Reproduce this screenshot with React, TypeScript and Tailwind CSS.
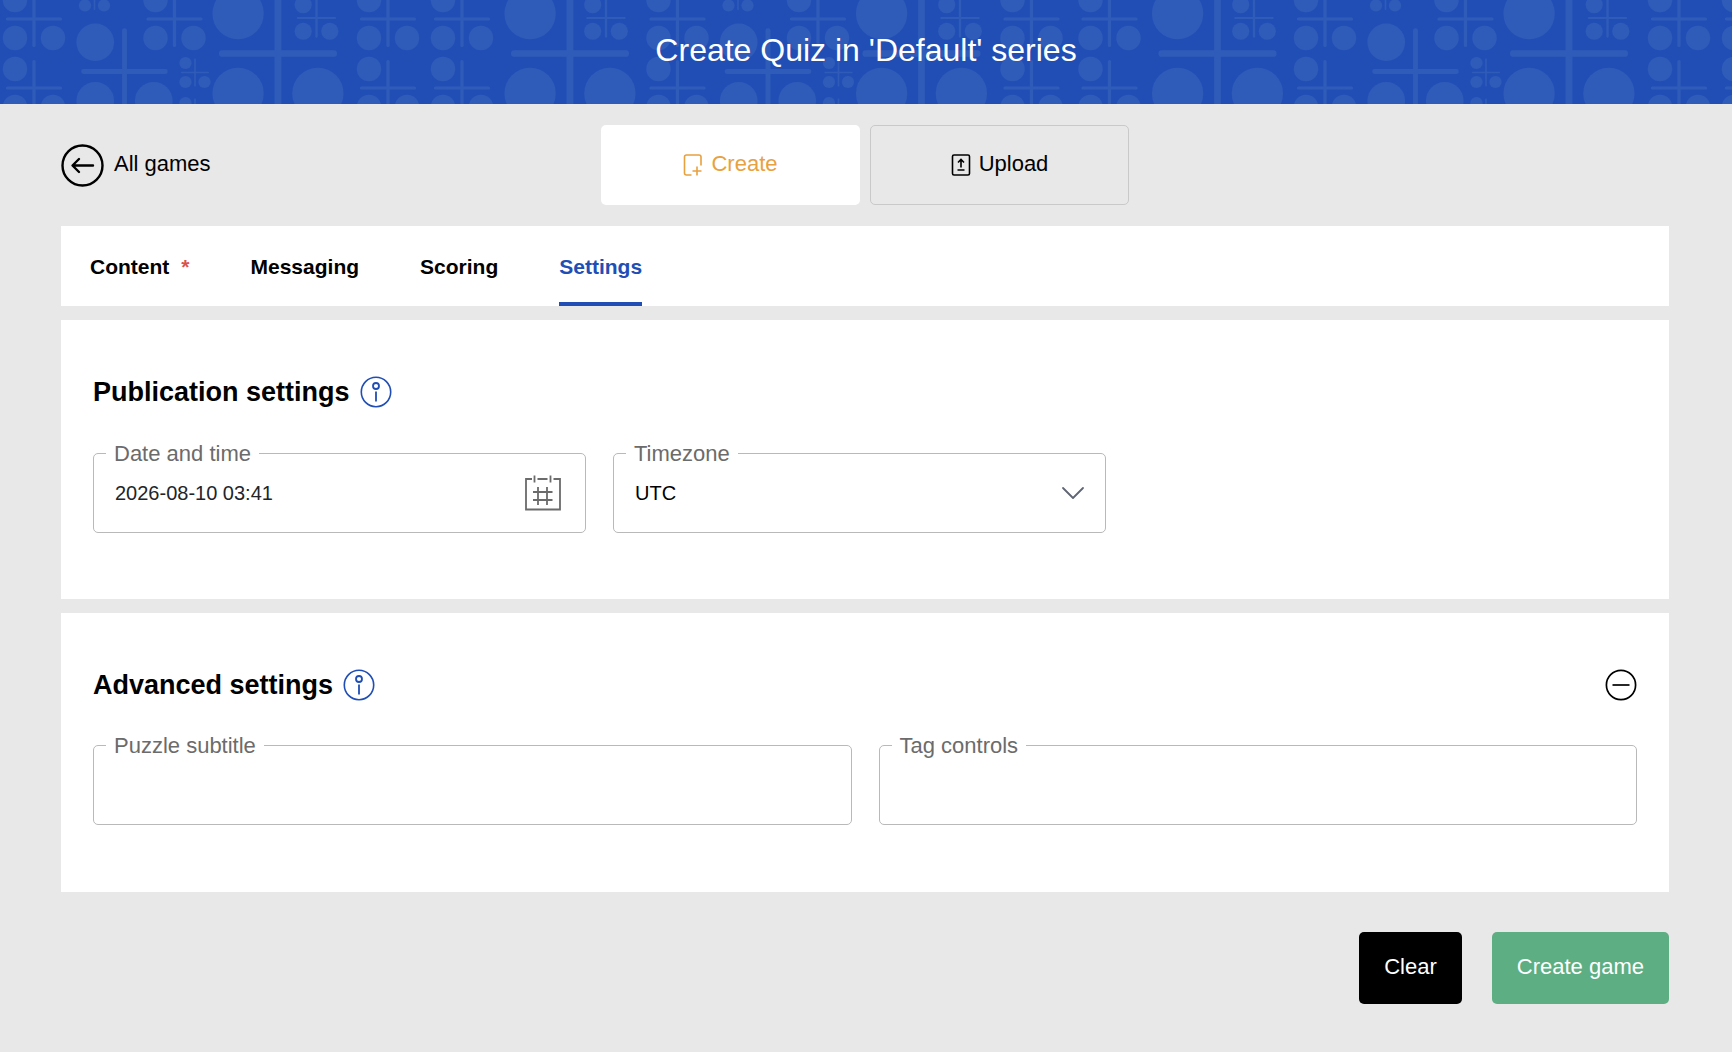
import React, { useState } from "react";

const tabs = [
  { name: "Content", required: true },
  { name: "Messaging" },
  { name: "Scoring" },
  { name: "Settings" },
];

interface MotifProps {
  x: number;
  y: number;
  size: number;
}

// a plus sign with a circle in three of its quarters, drawn round its centre
const Motif: React.FC<MotifProps> = ({ x, y, size }) => (
  <g transform={`translate(${x} ${y}) scale(${size})`}>
    <circle cx="-19" cy="-19" r="12.2" />
    <circle cx="-19" cy="19" r="12.2" />
    <circle cx="19" cy="19" r="12.2" />
    <path
      d="M-26.5 0H26.5M0 -26.5V26.5"
      stroke="#2f5bb9"
      strokeWidth="3.2"
      strokeLinecap="round"
    />
  </g>
);

// appears twice in every repeat of the header pattern
const motifRun = [
  { x: 34, y: 19, size: 1 },
  { x: 34, y: 88, size: 1 },
  { x: 94.5, y: -4, size: 0.5 },
  { x: 124.5, y: 71.5, size: 1.54 },
  { x: 174.5, y: 19, size: 1 },
  { x: 195, y: 72.5, size: 0.5 },
  { x: 195, y: 112.5, size: 0.5 },
  { x: 278, y: 53.5, size: 2.1 },
  { x: 316.5, y: 18, size: 0.7 },
  { x: 388, y: 19, size: 1 },
  { x: 388, y: 88, size: 1 },
];

const motifs = [
  ...motifRun,
  { x: 462, y: 19, size: 1 },
  { x: 462, y: 88, size: 1 },
  { x: 570, y: 53.5, size: 2.1 },
  { x: 606, y: 18, size: 0.7 },
  ...motifRun.map((motif) => ({ ...motif, x: motif.x + 643.5 })),
  { x: 1109.5, y: 19, size: 1 },
  { x: 1109.5, y: 88, size: 1 },
  { x: 1217.5, y: 53.5, size: 2.1 },
  { x: 1254, y: 18, size: 0.7 },
];

const HeaderPattern = () => (
  <svg className="absolute inset-0 h-full w-full" aria-hidden="true">
    <defs>
      <pattern
        id="motifs"
        width="1291"
        height="104"
        patternUnits="userSpaceOnUse"
      >
        <g fill="#2f5bb9">
          {motifs.map((motif, index) => (
            <Motif key={index} {...motif} />
          ))}
        </g>
      </pattern>
    </defs>
    <rect width="100%" height="100%" fill="url(#motifs)" />
  </svg>
);

const InfoIcon = () => (
  <svg width="32" height="32" viewBox="0 0 32 32" fill="none" stroke="#204eb5">
    <circle cx="16" cy="16" r="14.7" strokeWidth="1.6" />
    <circle cx="16" cy="10" r="3" strokeWidth="1.8" />
    <path d="M16 15.5V25.5" strokeWidth="1.8" />
  </svg>
);

const CalendarIcon = () => (
  <svg width="38" height="38" viewBox="0 0 38 38" fill="none" stroke="#6b6b6b">
    <path
      d="M8 5H2V35.5H36V5H29.5M13.5 5H23.5M10.5 1.5V8.5M26.5 1.5V8.5"
      strokeWidth="1.8"
    />
    <path d="M14 13V31M23 13V31M9 18H28.5M9 26H28.5" strokeWidth="1.8" />
  </svg>
);

interface FieldProps {
  id: string;
  label: string;
  children: React.ReactNode;
}

const Field: React.FC<FieldProps> = ({ id, label, children }) => (
  <div className="relative flex h-20 min-w-0 items-center rounded-[5px] border border-[#b9b9b9]">
    <label
      htmlFor={id}
      className="absolute -top-3.5 left-3 bg-white px-2 text-[22px] leading-7 text-[#6b6b6b]"
    >
      {label}
    </label>
    {children}
  </div>
);

interface SectionTitleProps {
  title: string;
}

const SectionTitle: React.FC<SectionTitleProps> = ({ title }) => (
  <div className="flex items-center gap-2.5">
    <h2 className="text-[27px] leading-8 font-bold">{title}</h2>
    <button type="button" aria-label={`About ${title}`}>
      <InfoIcon />
    </button>
  </div>
);

export default function App() {
  const [activeTab, setActiveTab] = useState("Settings");
  const [showAdvanced, setShowAdvanced] = useState(true);
  const [date, setDate] = useState("2026-08-10 03:41");
  const [subtitle, setSubtitle] = useState("");
  const [tags, setTags] = useState("");

  const clear = () => {
    setSubtitle("");
    setTags("");
  };

  return (
    <div className="min-h-screen bg-[#e8e8e8] font-['Liberation_Sans',Arial,sans-serif] text-[22px] leading-7 text-black">
      <header className="relative flex h-26 items-center justify-center overflow-hidden bg-[#204eb5] pb-1">
        <HeaderPattern />
        <h1 className="relative text-[32px] leading-10 text-white">
          Create Quiz in 'Default' series
        </h1>
      </header>

      <main className="pr-[63px] pb-10 pl-[61px]">
        <div className="grid grid-cols-[1fr_auto_1fr] items-center py-[21px]">
          <a href="#" className="flex items-center gap-2.5">
            <svg
              width="43"
              height="43"
              viewBox="0 0 43 43"
              fill="none"
              stroke="currentColor"
              strokeWidth="2.4"
            >
              <circle cx="21.5" cy="21.5" r="20" />
              <path
                d="M32 21.5H12M18 15L11.5 21.5L18 28"
                strokeLinecap="round"
                strokeLinejoin="round"
              />
            </svg>
            <span className="pb-0.5">All games</span>
          </a>
          <div className="flex gap-2.5">
            <button
              type="button"
              className="flex h-20 w-[259px] items-center justify-center gap-2 rounded-[5px] bg-white text-[#e8a13f]"
            >
              <svg
                width="20"
                height="24"
                viewBox="0 0 20 24"
                fill="none"
                stroke="currentColor"
                strokeWidth="1.6"
              >
                <path d="M8.5 22H3.5Q1.5 22 1.5 20V4Q1.5 2 3.5 2H16Q18 2 18 4V12.5" />
                <path d="M9.5 18H18.5M14 13.5V22.5" />
              </svg>
              <span className="pb-0.5">Create</span>
            </button>
            <button
              type="button"
              className="flex h-20 w-[259px] items-center justify-center gap-2 rounded-[5px] border border-[#c9c9c9]"
            >
              <svg
                width="20"
                height="24"
                viewBox="0 0 20 24"
                fill="none"
                stroke="currentColor"
                strokeWidth="1.6"
              >
                <rect x="1.5" y="2" width="17" height="20" rx="1.5" />
                <path d="M10 14.5V7M7 9.5L10 6.5L13 9.5M6.5 17H13.5" />
              </svg>
              <span className="pb-0.5">Upload</span>
            </button>
          </div>
        </div>

        <nav className="flex h-20 gap-[61px] bg-white px-[29px]">
          {tabs.map((tab) => (
            <button
              key={tab.name}
              type="button"
              onClick={() => setActiveTab(tab.name)}
              className={`flex items-center gap-3 border-b-4 pt-1.5 text-[21px] font-bold ${
                activeTab === tab.name
                  ? "border-[#204eb5] text-[#204eb5]"
                  : "border-transparent"
              }`}
            >
              {tab.name}
              {tab.required && <span className="text-[#d9534a]">*</span>}
            </button>
          ))}
        </nav>

        <section className="mt-3.5 bg-white px-8 pt-14 pb-[66px]">
          <SectionTitle title="Publication settings" />
          <div className="mt-11 grid grid-cols-[493px_493px] gap-[27px] pt-px">
            <Field id="date" label="Date and time">
              <input
                id="date"
                value={date}
                onChange={(e) => setDate(e.target.value)}
                className="h-full min-w-0 flex-1 pl-[21px] text-[20px] text-[#212529] outline-none"
              />
              <button
                type="button"
                aria-label="Open calendar"
                className="mr-[23px]"
              >
                <CalendarIcon />
              </button>
            </Field>
            <Field id="timezone" label="Timezone">
              <select
                id="timezone"
                className="h-full w-full appearance-none px-[21px] text-[20px] outline-none"
              >
                <option>UTC</option>
              </select>
              <svg
                className="pointer-events-none absolute right-5"
                width="24"
                height="14"
                viewBox="0 0 24 14"
                fill="none"
                stroke="#5f6573"
                strokeWidth="1.8"
              >
                <path
                  d="M2 2L12 12L22 2"
                  strokeLinecap="round"
                  strokeLinejoin="round"
                />
              </svg>
            </Field>
          </div>
        </section>

        <section className="mt-3.5 bg-white px-8 pt-14 pb-[67px]">
          <div className="flex items-center justify-between">
            <SectionTitle title="Advanced settings" />
            <button
              type="button"
              aria-label="Toggle advanced settings"
              aria-expanded={showAdvanced}
              onClick={() => setShowAdvanced(!showAdvanced)}
            >
              <svg
                width="32"
                height="32"
                viewBox="0 0 32 32"
                fill="none"
                stroke="currentColor"
                strokeWidth="1.7"
              >
                <circle cx="16" cy="16" r="14.6" />
                <path d="M7.5 16H24.5" />
              </svg>
            </button>
          </div>
          {showAdvanced && (
            <div className="mt-11 grid grid-cols-2 gap-[27px]">
              <Field id="subtitle" label="Puzzle subtitle">
                <input
                  id="subtitle"
                  value={subtitle}
                  onChange={(e) => setSubtitle(e.target.value)}
                  className="h-full w-full px-[21px] text-[20px] outline-none"
                />
              </Field>
              <Field id="tags" label="Tag controls">
                <input
                  id="tags"
                  value={tags}
                  onChange={(e) => setTags(e.target.value)}
                  className="h-full w-full px-[21px] text-[20px] outline-none"
                />
              </Field>
            </div>
          )}
        </section>

        <div className="mt-10 flex justify-end gap-[30px]">
          <button
            type="button"
            onClick={clear}
            className="h-18 rounded-[5px] bg-black px-[25px] pb-0.5 text-white"
          >
            Clear
          </button>
          <button
            type="button"
            className="h-18 rounded-[5px] bg-[#5dae83] px-[25px] pb-0.5 text-white"
          >
            Create game
          </button>
        </div>
      </main>
    </div>
  );
}
